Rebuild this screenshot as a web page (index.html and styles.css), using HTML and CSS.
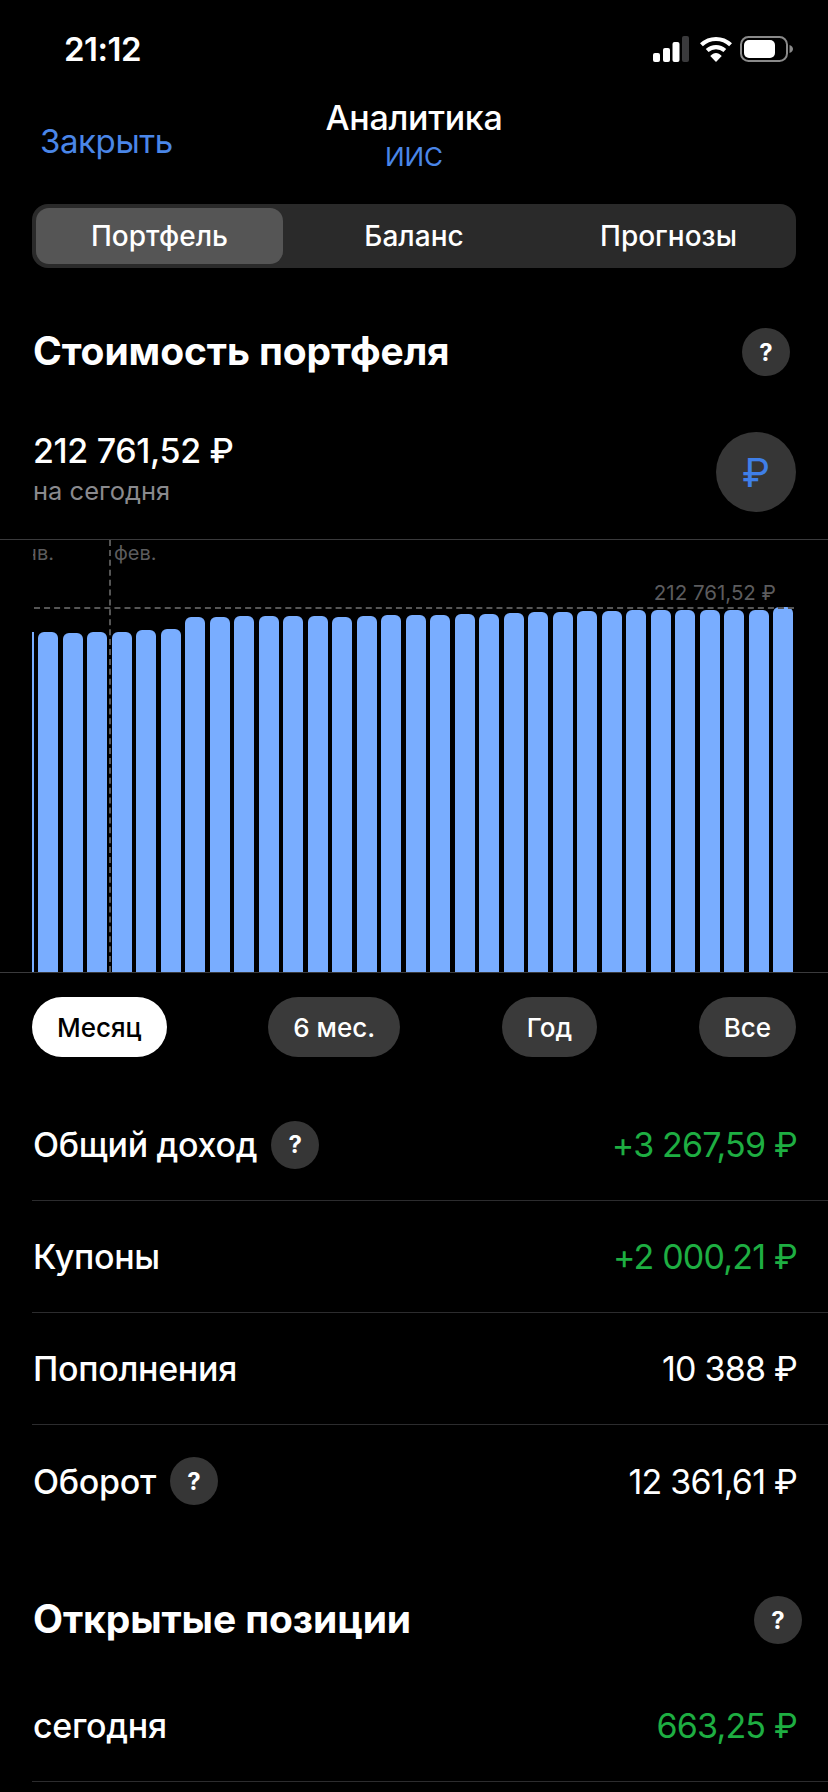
FILE: index.html
```html
<!DOCTYPE html>
<html lang="ru">
<head>
    <title>Аналитика</title>
    <link rel="stylesheet" href="styles.css">
</head>
<body>
    <div class="screen">
        <div class="status-bar">
            <span class="time">21:12</span>
            <div class="status-icons">
                <svg class="signal" width="36" height="26" viewBox="0 0 36 26">
                    <rect x="0" y="17" width="7" height="9" rx="2" fill="#fff"/>
                    <rect x="10" y="12" width="7" height="14" rx="2" fill="#fff"/>
                    <rect x="19.500" y="6" width="7" height="20" rx="2" fill="#fff"/>
                    <rect x="29" y="0" width="7" height="26" rx="2" fill="#3a3a3c"/>
                </svg>
                <svg class="wifi" width="34" height="26" viewBox="0 0 32 25">
                    <path d="M2 8.500C10 1 22 1 30 8.500" fill="none" stroke="#fff" stroke-width="4"/>
                    <path d="M7.500 14C12.500 9.500 19.500 9.500 24.500 14" fill="none" stroke="#fff" stroke-width="4"/>
                    <path d="M10.500 19.300C14 15.500 18 15.500 21.500 19.300L16 25Z" fill="#fff"/>
                </svg>
                <svg class="battery" width="53" height="26" viewBox="0 0 53 26">
                    <rect x="1" y="1" width="46" height="24" rx="7.500" fill="none" stroke="#8a8a8a" stroke-width="2"/>
                    <rect x="4" y="4" width="31" height="18" rx="5" fill="#fff"/>
                    <path d="M49.500 9C52 10 53 11.500 53 13C53 14.500 52 16 49.500 17Z" fill="#8a8a8a"/>
                </svg>
            </div>
        </div>

        <div class="nav">
            <a class="nav-close">Закрыть</a>
            <div class="nav-title">
                <div class="nav-name">Аналитика</div>
                <div class="nav-sub">ИИС</div>
            </div>
        </div>

        <div class="tabs">
            <div class="tab tab-active">Портфель</div>
            <div class="tab">Баланс</div>
            <div class="tab">Прогнозы</div>
        </div>

        <div class="section-head">
            <h2>Стоимость портфеля</h2>
            <span class="help">?</span>
        </div>

        <div class="summary">
            <div class="summary-text">
                <div class="summary-value">212 761,52 ₽</div>
                <div class="summary-note">на сегодня</div>
            </div>
            <div class="currency">₽</div>
        </div>

        <div class="chart">
            <span class="month month-jan">янв.</span>
            <span class="month month-feb">фев.</span>
            <span class="month-line"></span>
            <span class="max-line"></span>
            <span class="max-label">212 761,52 ₽</span>
            <div class="bars">
                <div class="bar bar-cut" style="height: 340px"></div>
                <div class="bar" style="height: 340px"></div>
                <div class="bar" style="height: 339px"></div>
                <div class="bar" style="height: 340px"></div>
                <div class="bar" style="height: 340px"></div>
                <div class="bar" style="height: 342px"></div>
                <div class="bar" style="height: 343px"></div>
                <div class="bar" style="height: 355px"></div>
                <div class="bar" style="height: 355px"></div>
                <div class="bar" style="height: 356px"></div>
                <div class="bar" style="height: 356px"></div>
                <div class="bar" style="height: 356px"></div>
                <div class="bar" style="height: 356px"></div>
                <div class="bar" style="height: 355px"></div>
                <div class="bar" style="height: 356px"></div>
                <div class="bar" style="height: 357px"></div>
                <div class="bar" style="height: 357px"></div>
                <div class="bar" style="height: 357px"></div>
                <div class="bar" style="height: 358px"></div>
                <div class="bar" style="height: 358px"></div>
                <div class="bar" style="height: 359px"></div>
                <div class="bar" style="height: 360px"></div>
                <div class="bar" style="height: 360px"></div>
                <div class="bar" style="height: 361px"></div>
                <div class="bar" style="height: 361px"></div>
                <div class="bar" style="height: 362px"></div>
                <div class="bar" style="height: 362px"></div>
                <div class="bar" style="height: 362px"></div>
                <div class="bar" style="height: 362px"></div>
                <div class="bar" style="height: 362px"></div>
                <div class="bar" style="height: 362px"></div>
                <div class="bar" style="height: 365px"></div>
            </div>
        </div>

        <div class="periods">
            <div class="period period-active">Месяц</div>
            <div class="period">6 мес.</div>
            <div class="period">Год</div>
            <div class="period">Все</div>
        </div>

        <div class="rows">
            <div class="row">
                <div class="row-label">Общий доход <span class="help">?</span></div>
                <div class="row-value green">+3 267,59 ₽</div>
            </div>
            <div class="row">
                <div class="row-label">Купоны</div>
                <div class="row-value green">+2 000,21 ₽</div>
            </div>
            <div class="row">
                <div class="row-label">Пополнения</div>
                <div class="row-value">10 388 ₽</div>
            </div>
            <div class="row row-last">
                <div class="row-label">Оборот <span class="help">?</span></div>
                <div class="row-value">12 361,61 ₽</div>
            </div>
        </div>

        <div class="section-head section-open">
            <h2>Открытые позиции</h2>
            <span class="help">?</span>
        </div>

        <div class="rows rows-open">
            <div class="row">
                <div class="row-label">сегодня</div>
                <div class="row-value green">663,25 ₽</div>
            </div>
        </div>
    </div>
</body>
</html>
```

FILE: styles.css
```css
* { box-sizing: border-box; }
html, body { margin: 0; background-color: #000; }
body { font-family: Inter, "Noto Sans", sans-serif; color: #fff; }
.screen { width: 828px; height: 1792px; overflow: hidden; }

.status-bar { height: 98px; padding: 0 35px 0 64px; display: flex; justify-content: space-between; align-items: center; }
.time { font-size: 33px; font-weight: 600; letter-spacing: -0.5px; }
.status-icons { display: flex; align-items: center; gap: 7px; }
.signal { margin-right: 3px; }

.nav { height: 106px; padding: 0 40px; position: relative; }
.nav-close { display: block; padding-top: 23px; font-size: 33px; line-height: 40px; color: #4a86e8; letter-spacing: -0.4px; }
.nav-title { position: absolute; left: 0; right: 0; top: 0; text-align: center; }
.nav-name { font-size: 34px; font-weight: 500; line-height: 40px; letter-spacing: -0.3px; }
.nav-sub { margin-top: 2px; font-size: 26px; line-height: 34px; color: #4a86e8; }

.tabs { margin: 0 32px; height: 64px; padding: 4px; border-radius: 16px; background-color: #2a2a2a; display: grid; grid-template-columns: 247px 262px 247px; }
.tab { display: flex; justify-content: center; align-items: center; font-size: 28px; font-weight: 500; border-radius: 13px; }
.tab-active { background-color: #555; }

.section-head { margin: 60px 38px 0 33px; height: 48px; display: flex; justify-content: space-between; align-items: center; }
.section-head h2 { margin: -3px 0 0; font-size: 39px; font-weight: 700; letter-spacing: -0.1px; }
.section-open { margin: 59px 26px 0 33px; }

.help { display: inline-flex; justify-content: center; align-items: center; width: 48px; height: 48px; border-radius: 50%; background-color: #363636; font-size: 24px; font-weight: 700; letter-spacing: 0; }

.summary { margin: 56px 32px 0 33px; height: 80px; display: flex; justify-content: space-between; align-items: center; }
.summary-text { margin-bottom: 4px; }
.summary-value { margin-top: -4px; font-size: 34px; font-weight: 500; line-height: 40px; letter-spacing: -0.35px; }
.summary-note { margin-top: 5px; font-size: 25.500px; line-height: 30px; color: #8a8a8e; }
.currency { width: 80px; height: 80px; border-radius: 50%; background-color: #363636; color: #3f7fe8; font-size: 40px; font-weight: 400; display: flex; justify-content: center; align-items: center; }

.chart { margin-top: 27px; height: 434px; border-top: 1px solid #3a3a3c; border-bottom: 1px solid #3a3a3c; position: relative; }
.bars { height: 100%; padding-left: 32px; display: flex; align-items: flex-end; gap: 4.500px; }
.bar { width: 20px; flex: none; background-color: #79adff; border-radius: 6px 6px 0 0; }
.bar-cut { width: 1.500px; border-radius: 0; }
.month { position: absolute; top: 1px; font-size: 20px; line-height: 24px; color: #5c5c5e; }
.month-jan { left: 33px; width: 21px; overflow: hidden; display: flex; justify-content: flex-end; }
.month-feb { left: 114px; }
.month-line { position: absolute; left: 109px; top: 0; bottom: 0; border-left: 2px dashed #555; }
.max-line { position: absolute; left: 34px; right: 34px; top: 67px; border-top: 2px dashed #555; }
.max-label { position: absolute; right: 52px; top: 40px; font-size: 20.500px; line-height: 26px; color: #5c5c5e; }

.periods { margin: 24px 32px 0; display: flex; justify-content: space-between; }
.period { height: 60px; padding: 0 25px; border-radius: 30px; background-color: #3a3a3a; display: flex; align-items: center; font-size: 26px; font-weight: 500; }
.period-active { background-color: #fff; color: #000; }

.rows { margin: 32px 0 0 32px; }
.rows-open { margin-top: 26px; }
.row { height: 112px; padding-right: 31px; border-bottom: 1px solid #2c2c2e; display: flex; justify-content: space-between; align-items: center; font-size: 34px; letter-spacing: -0.3px; }
.row-last { border-bottom: none; }
.row-label { display: flex; align-items: center; gap: 14px; padding-left: 1px; font-weight: 500; }
.row-value { letter-spacing: -0.8px; }
.green { color: #1eae42; }
```
